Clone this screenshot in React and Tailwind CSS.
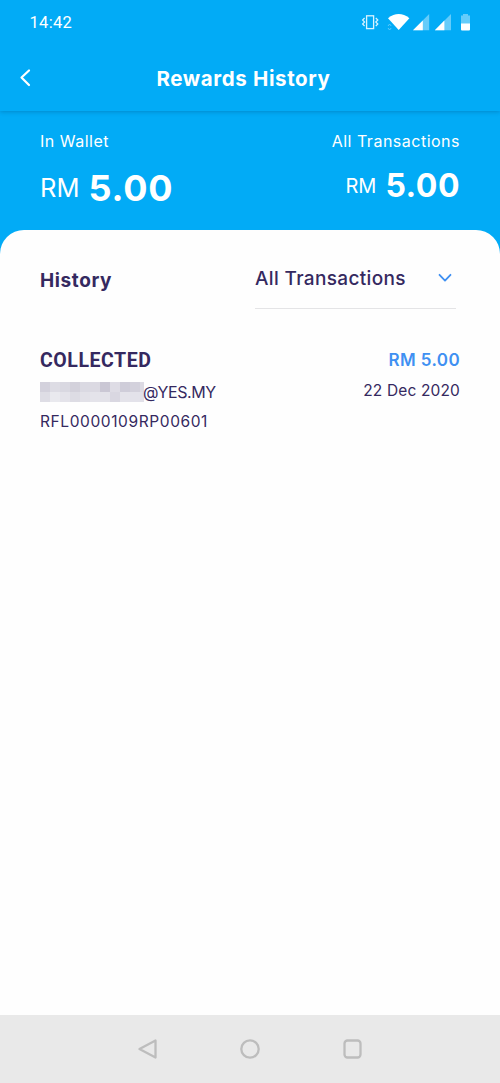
const mosaicTop = ['#d3d1dc', '#dddce4', '#d9d8e1', '#d3d1db', '#dad9e2', '#dbd9e2', '#cac7d4', '#dedce5', '#cfcdd9', '#d3d1dc', '#dcdae3'];
const mosaicBottom = ['#dedde5', '#e9e9ee', '#e4e3ea', '#dddce4', '#e2e1e8', '#e4e3ea', '#e3e2e9', '#d9d7e1', '#e4e3ea', '#e3e2ea', '#e1e0e8'];

function StatusBar() {
  return (
    <div className="flex h-11 items-center justify-between pl-[29.5px] pr-[29px] font-['Roboto',sans-serif] text-[16.5px] text-white">
      <span className="pt-[2px] tracking-[0.3px]">14:42</span>
      <svg width="110" height="20" viewBox="361 12 110 20" fill="none">
        <rect x="366.6" y="15.8" width="7" height="12.8" stroke="#d9f3ff" strokeWidth="1.3" />
        <path d="M364.6 18l-2 2 2 2-2 2 2 2M375.8 18l2 2-2 2 2 2-2 2" stroke="#d9f3ff" strokeWidth="1.2" />
        <path d="M388 18.2Q398.700 10 409.400 18.2L398.700 30z" fill="#fff" />
        <path d="M388 26l1.600-2 1.600 2M388 28l1.600 2 1.600-2" stroke="#65ccfa" strokeWidth="0.9" />
        <path d="M413 30.200L429.200 14v16.200z" fill="#65ccfa" />
        <path d="M413 30.200L422.800 20.400v9.800z" fill="#fff" />
        <path d="M434.800 30.200L451 14v16.200z" fill="#65ccfa" />
        <path d="M434.800 30.200L444.400 20.600v9.600z" fill="#fff" />
        <path d="M461 15.500h2V14h5v1.500h2V24h-9z" fill="#65ccfa" />
        <path d="M461 23.500h9v6q0 1-1 1h-7q-1 0-1-1z" fill="#fff" />
      </svg>
    </div>
  );
}

function TitleBar() {
  return (
    <div className="grid h-[67px] grid-cols-[60px_1fr_73px] items-center">
      <svg width="14" height="20" viewBox="0 0 14 20" fill="none" className="ml-[18px]">
        <path d="M11 2.500L3.500 9.500 11 17" stroke="#fff" strokeWidth="2.200" strokeLinecap="round" strokeLinejoin="round" />
      </svg>
      <h1 className="whitespace-nowrap pt-[2px] text-center text-[20.5px] leading-6 font-bold tracking-[0.62px] text-white">Rewards History</h1>
    </div>
  );
}

function Balances() {
  return (
    <section className="flex h-[119px] justify-between px-10 pt-5 text-white">
      <div>
        <p className="text-[16px] leading-5 tracking-[0.5px]">In Wallet</p>
        <div className="mt-[17px] flex h-10 items-center gap-[9px]">
          <span className="text-[25.5px] tracking-[0px]">RM</span>
          <span className="text-[36px] font-bold tracking-[0.8px]">5.00</span>
        </div>
      </div>
      <div className="flex flex-col items-end">
        <p className="text-[16px] leading-5 tracking-[0.5px]">All Transactions</p>
        <div className="mt-[15px] flex h-10 items-center gap-[9px]">
          <span className="text-[20px] tracking-[0px]">RM</span>
          <span className="text-[32px] font-bold tracking-[0.5px]">5.00</span>
        </div>
      </div>
    </section>
  );
}

function Filter() {
  return (
    <div className="flex items-start justify-between pt-[30px] pl-10 pr-11">
      <h2 className="pt-[9px] text-[19px] leading-6 font-bold tracking-[0.6px]">History</h2>
      <button className="flex h-[49px] w-[201px] items-start justify-between border-b border-[#e4e4e6] pt-[7px] pr-1">
        <span className="whitespace-nowrap text-[19px] leading-6 font-medium tracking-[0.35px]">All Transactions</span>
        <svg width="14" height="24" viewBox="0 0 14 24" fill="none">
          <path d="M1.500 7.800L7 13.600 12.500 7.800" stroke="#3f90f2" strokeWidth="1.800" strokeLinecap="round" strokeLinejoin="round" />
        </svg>
      </button>
    </div>
  );
}

function Mosaic() {
  return (
    <svg width="104" height="20" viewBox="0 0 104 20" shapeRendering="crispEdges">
      {mosaicTop.map((c, i) => <rect key={'t' + i} x={i * 10} y="0" width="10" height="10" fill={c} />)}
      {mosaicBottom.map((c, i) => <rect key={'b' + i} x={i * 10} y="10" width="10" height="10" fill={c} />)}
    </svg>
  );
}

function Transaction() {
  return (
    <article className="flex justify-between px-10 pt-[39px]">
      <div>
        <h3 className="pt-[1px] font-['Roboto',sans-serif] text-[19.5px] leading-6 font-bold tracking-[0.55px]">COLLECTED</h3>
        <div className="mt-[9px] flex h-5 items-center">
          <Mosaic />
          <span className="-ml-px text-[16px] leading-5 tracking-[-0.4px]">@YES.MY</span>
        </div>
        <p className="mt-[10px] text-[15.5px] leading-5 tracking-[0.6px]">RFL0000109RP00601</p>
      </div>
      <div className="flex flex-col items-end">
        <p className="text-[17px] leading-6 font-semibold tracking-[0.4px] text-[#3f90f2]">RM 5.00</p>
        <p className="mt-[9px] text-[15.5px] leading-5 tracking-[0.15px]">22 Dec 2020</p>
      </div>
    </article>
  );
}

function NavigationBar() {
  return (
    <nav className="flex h-[68px] items-center justify-center gap-[80px] bg-[#e9e9e9]">
      {['M2.500 11L18.500 2.500v17z', 'M11 2.300a8.700 8.700 0 1 0 0 17.400 8.700 8.700 0 1 0 0-17.400z', 'M6.500 2.500h10a3 3 0 0 1 3 3v11a3 3 0 0 1-3 3h-10a3 3 0 0 1-3-3v-11a3 3 0 0 1 3-3z'].map((d) => (
        <svg key={d} width="22" height="22" viewBox="0 0 22 22" fill="none">
          <path d={d} stroke="#bdbdbd" strokeWidth="2.300" strokeLinejoin="round" />
        </svg>
      ))}
    </nav>
  );
}

export default function App() {
  return (
    <div className="flex h-[1083px] w-[500px] flex-col bg-[#02abf6] font-['Inter',sans-serif] text-[#352960]">
      <header className="z-10 h-[111px] shrink-0 bg-[#02abf6] shadow-[0_1px_4px_rgba(0,60,110,0.3)]">
        <StatusBar />
        <TitleBar />
      </header>
      <Balances />
      <main className="flex-1 rounded-t-[24px] bg-[#fefefe]">
        <Filter />
        <Transaction />
      </main>
      <NavigationBar />
    </div>
  );
}
